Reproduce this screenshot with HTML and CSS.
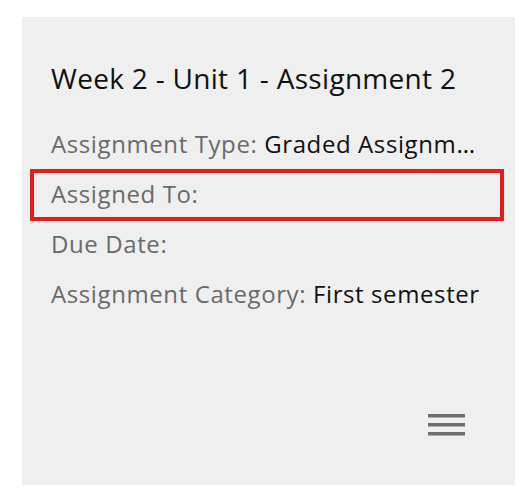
FILE: index.html
```html
<!DOCTYPE html>
<html>
<head>
<meta charset="utf-8">
<link rel="stylesheet" href="styles.css">
</head>
<body>
<div class="card">
  <h2 class="title">Week 2 - Unit 1 - Assignment 2</h2>
  <div class="rows">
    <div class="row"><span class="label">Assignment Type:</span> <span class="value">Graded Assignment</span></div>
    <div class="row highlight"><span class="label">Assigned To:</span></div>
    <div class="row"><span class="label">Due Date:</span></div>
    <div class="row"><span class="label">Assignment Category:</span> <span class="value">First semester</span></div>
  </div>
  <div class="footer">
    <svg class="menu" width="37" height="24" viewBox="0 0 37 24">
      <rect x="0" y="1" width="37" height="3.5" fill="#6e6e6e"/>
      <rect x="0" y="10" width="37" height="3.5" fill="#6e6e6e"/>
      <rect x="0" y="19" width="37" height="3.5" fill="#6e6e6e"/>
    </svg>
  </div>
</div>
</body>
</html>
```

FILE: styles.css
```css
html, body {
  margin: 0;
  padding: 0;
  background: #ffffff;
}
body {
  padding: 17px 0 0 22px;
  font-family: "Open Sans", "Noto Sans", sans-serif;
}
.card {
  width: 493px;
  height: 468px;
  background: #efefef;
  display: flex;
  flex-direction: column;
  box-sizing: border-box;
}
.title {
  margin: 43px 0 0 29px;
  font-size: 28px;
  letter-spacing: 0.3px;
  line-height: 36px;
  font-weight: 400;
  color: #111111;
}
.rows {
  margin: 23px 11px 0 8px;
}
.row {
  box-sizing: border-box;
  height: 52px;
  border: 4px solid transparent;
  padding: 6px 17px 0 17px;
  font-size: 24px;
  letter-spacing: 0.6px;
  line-height: 30px;
  white-space: nowrap;
  overflow: hidden;
  text-overflow: ellipsis;
}
.row + .row {
  margin-top: -2px;
}
.row.highlight {
  border-color: #e61c1c;
}
.label {
  color: #6a6a6a;
}
.value {
  color: #111111;
}
.footer {
  margin-top: auto;
  display: flex;
  justify-content: flex-end;
  padding: 0 50px 48px 0;
}
.menu {
  display: block;
}
```
